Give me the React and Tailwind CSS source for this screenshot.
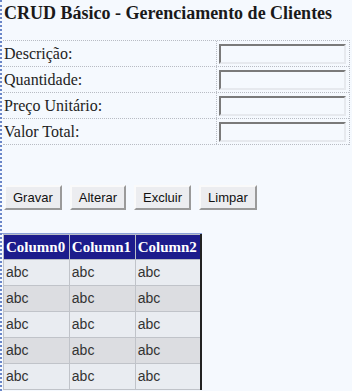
import React from 'react';

const fields = ['Descrição:', 'Quantidade:', 'Preço Unitário:', 'Valor Total:'];
const buttons = ['Gravar', 'Alterar', 'Excluir', 'Limpar'];
const rows = [0, 1, 2, 3, 4];

const App = () => {
  return (
    <div className="w-[352px] h-[391px] overflow-hidden bg-[#f5f9fe] border-l-2 border-dotted border-[#6a86c8] relative">
      {/* TITLE */}
      <h1 className="pl-[2px] pt-[3px] h-[40px] text-[18px] font-bold text-[#1a1a1a] font-['Liberation_Serif',serif] leading-[20px]">
        CRUD Básico - Gerenciamento de Clientes
      </h1>

      {/* FORM */}
      <div className="ml-[1px] mr-[2px] border-t border-r border-dotted border-[#b8bcc4]">
        {fields.map((f) => (
          <div key={f} className="flex h-[26px] border-b border-dotted border-[#b8bcc4]">
            <div className="w-[214px] border-r border-dotted border-[#b8bcc4] pl-[1px] flex items-center text-[16px] text-[#222] font-['Liberation_Serif',serif]">
              {f}
            </div>
            <div className="flex-1 flex items-center pl-[2px]">
              <div className="w-[127px] h-[20px] bg-[#f5f9fe] border-2 border-t-[#7a7a7a] border-l-[#7a7a7a] border-r-[#e6e9ee] border-b-[#e6e9ee]" />
            </div>
          </div>
        ))}
      </div>

      {/* BUTTONS */}
      <div className="flex gap-[8px] pl-[2px] mt-[40px]">
        {buttons.map((b) => (
          <div
            key={b}
            className="h-[25px] px-[7px] flex items-center bg-[#ecedf0] border-2 border-t-[#fafafa] border-l-[#fafafa] border-r-[#9a9a9a] border-b-[#9a9a9a] text-[13px] text-[#111] font-['Liberation_Sans',sans-serif]"
          >
            {b}
          </div>
        ))}
      </div>

      {/* GRID */}
      <div className="mt-[23px] w-[200px] border-t border-[#8aa0d8]">
        <table className="ml-[1px] border-r-2 border-[#222] border-collapse font-['Liberation_Sans',sans-serif]">
          <thead>
            <tr className="bg-[#1c1c8c] h-[25px]">
              {['Column0', 'Column1', 'Column2'].map((c) => (
                <th key={c} className="w-[66px] px-[2px] text-left text-[15px] font-bold text-white font-['Liberation_Serif',serif] border border-[#b9bdc6]">
                  {c}
                </th>
              ))}
            </tr>
          </thead>
          <tbody>
            {rows.map((r) => (
              <tr key={r} className={`h-[26px] ${r % 2 === 1 ? 'bg-[#dcdde1]' : 'bg-[#e9ecf1]'}`}>
                {[0, 1, 2].map((c) => (
                  <td key={c} className="px-[2px] text-[14px] text-[#333] border border-[#c0c3c9]">
                    abc
                  </td>
                ))}
              </tr>
            ))}
          </tbody>
        </table>
      </div>
    </div>
  );
};

export default App;
